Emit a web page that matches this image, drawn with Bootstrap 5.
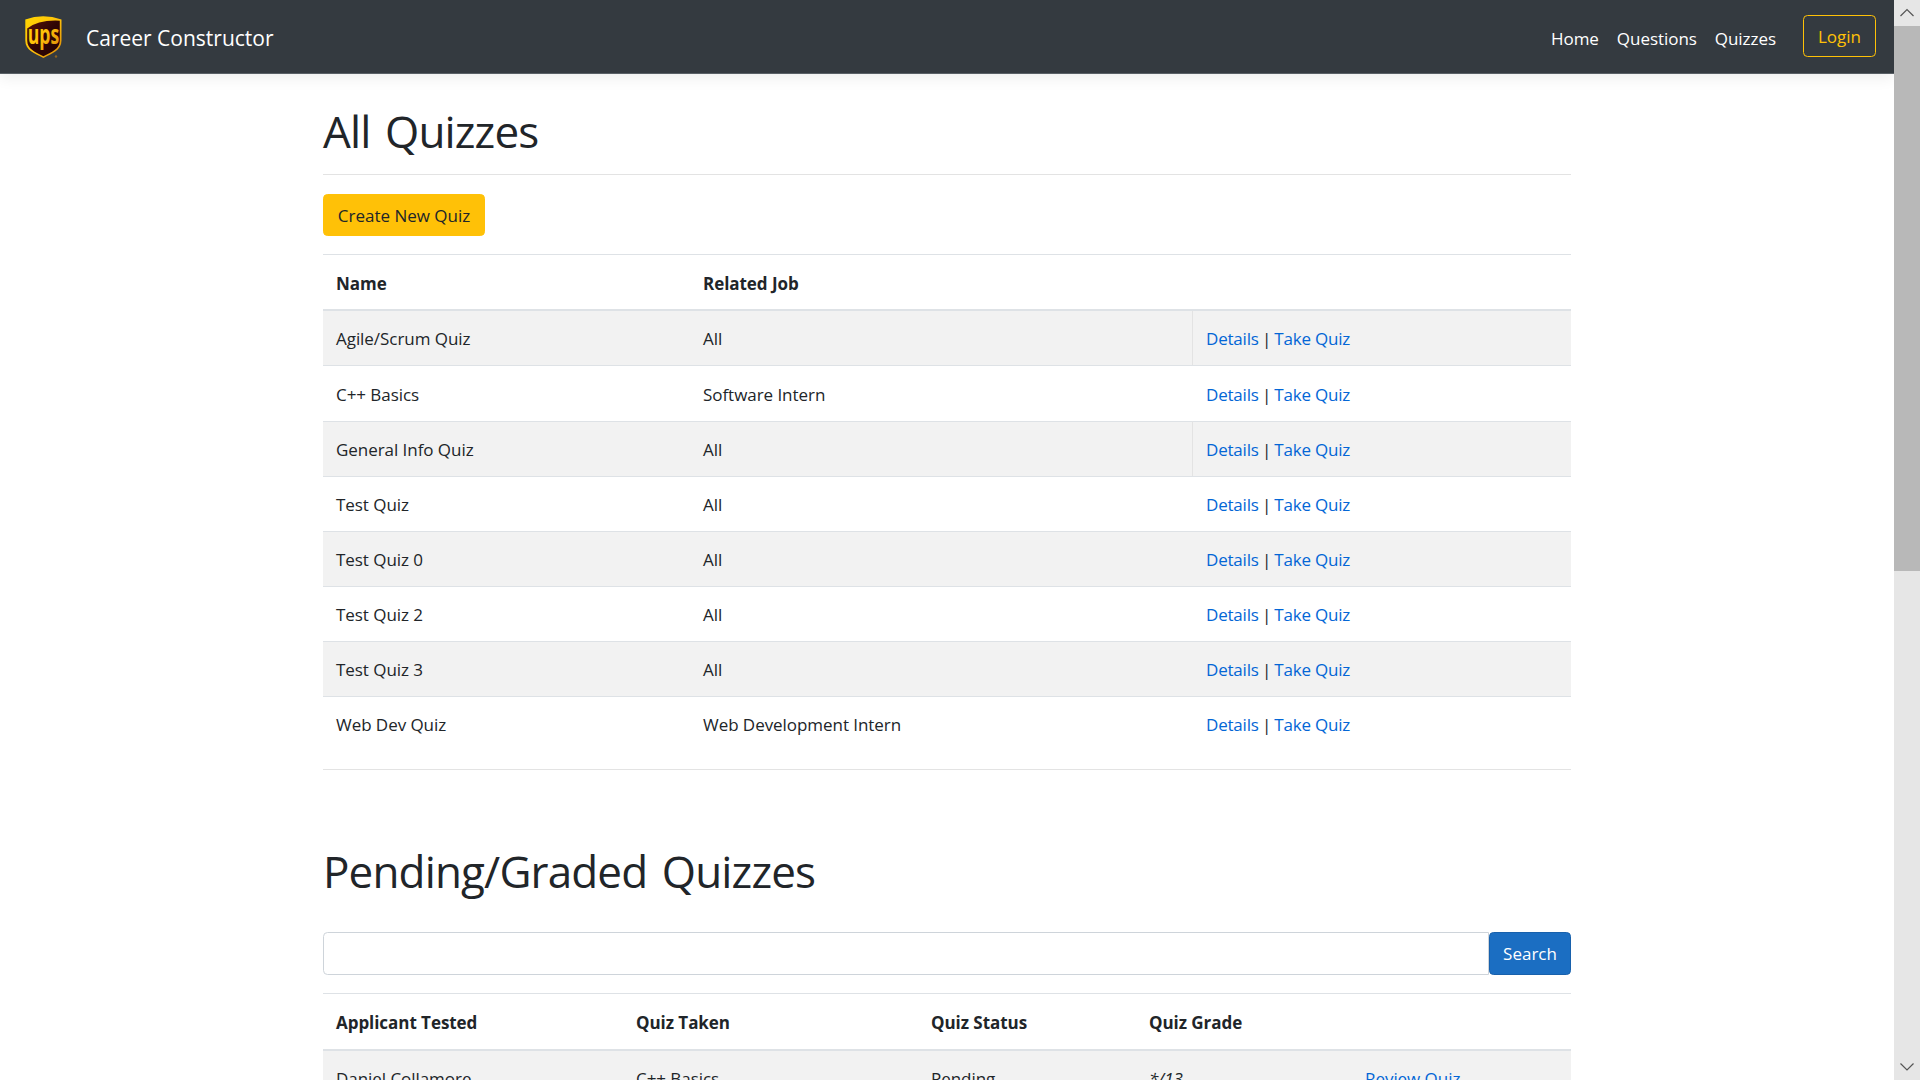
<!DOCTYPE html>
<html lang="en">
<head>
<meta charset="utf-8">
<meta name="viewport" content="width=device-width, initial-scale=1">
<title>Career Constructor</title>
<link href="https://cdn.jsdelivr.net/npm/bootstrap@5.3.0/dist/css/bootstrap.min.css" rel="stylesheet">
<style>
  body { font-family: "Segoe UI", "Open Sans", "Noto Sans", sans-serif; font-size: 17px; line-height: 27px; letter-spacing: -.05px; color: #212529; background: #fff; }
  .topbar { height: 74px; background: #343a40; border-bottom: 1px solid #596066; box-shadow: 0 4px 14px rgba(0,0,0,.07); padding: 0 18px 0 24px; }
  .topbar .navbar-brand { font-size: 21px; letter-spacing: 0; color: #fff; gap: 23px; padding: 0; margin: 0; }
  .topbar .navbar-brand span { padding-top: 4px; }
  .topbar .navbar-brand svg { overflow: visible; }
  .topbar .nav-link { color: #fff; padding: 3px 0 0; margin-right: 18px; }
  .login-btn { width: 73px; margin: -1px 0 0 9px; }
  .btn { --bs-btn-font-size: 17px; --bs-btn-line-height: 27px; --bs-btn-border-radius: 4.5px; --bs-btn-padding-x: 0; --bs-btn-padding-y: 0; height: 42px; letter-spacing: 0; }
  .page-body { width: 1248px; padding-top: 30px; margin: 0 auto; }
  .page-body h1 { font-size: 44px; line-height: 54px; font-weight: 400; letter-spacing: -.85px; word-spacing: 4px; margin: 0; }
  .page-body hr { margin: 16px 0 19px; border-top: 1px solid #e3e3e3; opacity: 1; }
  .create-btn { width: 162px; margin-bottom: 18px; --bs-btn-color: #212529; }
  .quiz-table { table-layout: fixed; border-collapse: separate; border-spacing: 0; margin: 0; }
  .quiz-table > :not(caption) > * > * { padding: 1px 13px 0; height: 55px; border: 0 solid #dee2e6; border-top-width: 1px; vertical-align: middle; box-shadow: none; background: transparent; color: #212529; }
  .quiz-table > thead > tr > th { height: 57px; padding-top: 2px; border-bottom-width: 2px; font-weight: 700; }
  .results-table > thead > tr > th { height: 58px; }
  .quiz-table > tbody > tr:first-child > td { height: 54px; border-top-width: 0; }
  .quiz-table > tbody > tr:nth-child(2) > td { height: 56px; }
  .quiz-table > tbody > tr:nth-child(odd) > td { background: #f2f2f2; }
  .quiz-table > tbody > tr > td.links { padding-left: 14px; letter-spacing: -.2px; word-spacing: -1px; }
  .quiz-table > tbody > tr > td.seam { border-left: 1px solid #e3e3e3; padding-left: 13px; }
  .quiz-table a { color: #0366d6; text-decoration: none; word-spacing: 0; }
  .search-row { margin: 34px 0 18px; height: 43px; }
  .search-row .form-control { border: 1px solid #ced4da; border-radius: 4.5px 0 0 4.5px; height: 43px; }
  .search-btn { width: 82px; height: 43px; flex: none; --bs-btn-bg: #1b6ec2; --bs-btn-border-color: #1861ac; }
  .scroll-track { width: 26px; background: #e6e6e6; flex: none; }
  .scroll-thumb { height: 545px; background: #b8b8b8; }
  .scroll-track svg { width: 26px; height: 26px; fill: none; stroke: #555; stroke-width: 1.2; display: block; }
</style>
<script src="https://cdn.jsdelivr.net/npm/bootstrap@5.3.0/dist/js/bootstrap.bundle.min.js"></script>
</head>
<body class="d-flex vh-100 overflow-hidden">
<div class="flex-grow-1 overflow-hidden">
  <header>
    <nav class="topbar d-flex align-items-center">
      <a class="navbar-brand d-flex align-items-center" href="#">
        <svg width="39" height="44" viewBox="0 0 39 44" aria-label="UPS">
          <defs>
            <linearGradient id="gold" x1="0" y1="0" x2="1" y2="1"><stop offset="0" stop-color="#ffd500"/><stop offset=".5" stop-color="#ffc20a"/><stop offset="1" stop-color="#d98508"/></linearGradient>
            <linearGradient id="brown" x1="0" y1="0" x2="1" y2="1"><stop offset="0" stop-color="#5a1408"/><stop offset=".5" stop-color="#300505"/><stop offset="1" stop-color="#240303"/></linearGradient>
          </defs>
          <path fill="url(#gold)" d="M1.3 4.600Q19 -2.200 37.500 4.600V25.500C37.500 35.500 28 38.500 19.400 43C10.800 38.500 1.300 35.500 1.300 25.500Z"/>
          <path fill="url(#brown)" d="M3.200 13.500Q14.500 4.600 35.800 5.700V25.500C35.800 34.100 27.500 37 19.400 41.200C11.300 37 3.200 34.100 3.200 25.500Z"/>
          <text x="3.700" y="28.700" textLength="31.500" lengthAdjust="spacingAndGlyphs" font-family="Open Sans, sans-serif" font-size="26" font-weight="700" letter-spacing="0" fill="url(#gold)">ups</text>
          <circle cx="32" cy="41.500" r="1.200" fill="#8d6320"/>
        </svg>
        <span>Career Constructor</span>
      </a>
      <div class="d-flex align-items-center ms-auto">
        <a class="nav-link" href="#">Home</a>
        <a class="nav-link" href="#">Questions</a>
        <a class="nav-link" href="#">Quizzes</a>
        <a class="btn btn-outline-warning login-btn d-flex align-items-center justify-content-center" href="#">Login</a>
      </div>
    </nav>
  </header>
  <main class="page-body">
    <h1>All Quizzes</h1>
    <hr>
    <a class="btn btn-warning create-btn d-flex align-items-center justify-content-center" href="#">Create New Quiz</a>
    <table class="table quiz-table">
      <colgroup><col style="width:367px"><col style="width:502px"><col></colgroup>
      <thead><tr><th>Name</th><th>Related Job</th><th></th></tr></thead>
      <tbody>
        <tr><td>Agile/Scrum Quiz</td><td>All</td><td class="links seam"><a href="#">Details</a> | <a href="#">Take Quiz</a></td></tr>
        <tr><td>C++ Basics</td><td>Software Intern</td><td class="links"><a href="#">Details</a> | <a href="#">Take Quiz</a></td></tr>
        <tr><td>General Info Quiz</td><td>All</td><td class="links seam"><a href="#">Details</a> | <a href="#">Take Quiz</a></td></tr>
        <tr><td>Test Quiz</td><td>All</td><td class="links"><a href="#">Details</a> | <a href="#">Take Quiz</a></td></tr>
        <tr><td>Test Quiz 0</td><td>All</td><td class="links"><a href="#">Details</a> | <a href="#">Take Quiz</a></td></tr>
        <tr><td>Test Quiz 2</td><td>All</td><td class="links"><a href="#">Details</a> | <a href="#">Take Quiz</a></td></tr>
        <tr><td>Test Quiz 3</td><td>All</td><td class="links"><a href="#">Details</a> | <a href="#">Take Quiz</a></td></tr>
        <tr><td>Web Dev Quiz</td><td>Web Development Intern</td><td class="links"><a href="#">Details</a> | <a href="#">Take Quiz</a></td></tr>
      </tbody>
    </table>
    <hr style="margin:18px 0 74px">
    <h1>Pending/Graded Quizzes</h1>
    <form class="search-row d-flex">
      <input class="form-control" type="text" aria-label="Search">
      <button class="btn btn-primary search-btn" type="button">Search</button>
    </form>
    <table class="table quiz-table results-table">
      <colgroup><col style="width:300px"><col style="width:295px"><col style="width:218px"><col style="width:216px"><col></colgroup>
      <thead><tr><th>Applicant Tested</th><th>Quiz Taken</th><th>Quiz Status</th><th>Quiz Grade</th><th></th></tr></thead>
      <tbody>
        <tr><td>Daniel Collamore</td><td>C++ Basics</td><td>Pending</td><td><em>*/13</em></td><td><a href="#">Review Quiz</a></td></tr>
      </tbody>
    </table>
  </main>
</div>
<aside class="scroll-track d-flex flex-column">
  <svg viewBox="0 0 26 26"><path d="M6.500 16L13 9.500L19.500 16"/></svg>
  <div class="scroll-thumb"></div>
  <svg class="mt-auto" viewBox="0 0 26 26"><path d="M6.500 9.500L13 16L19.500 9.500"/></svg>
</aside>
</body>
</html>
